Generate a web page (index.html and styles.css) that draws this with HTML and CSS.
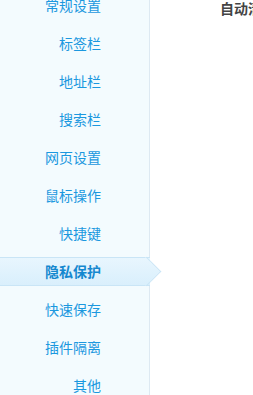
FILE: index.html
```html
<!DOCTYPE html>
<html lang="zh-CN">
<head>
    <meta charset="UTF-8">
    <meta name="viewport" content="width=device-width, initial-scale=1.0">
    <title>设置</title>
    <link rel="stylesheet" href="styles.css">
</head>
<body>
    <div class="settings">
        <ul class="nav">
            <li>常规设置</li>
            <li>标签栏</li>
            <li>地址栏</li>
            <li>搜索栏</li>
            <li>网页设置</li>
            <li>鼠标操作</li>
            <li>快捷键</li>
            <li class="active">隐私保护</li>
            <li>快速保存</li>
            <li>插件隔离</li>
            <li>其他</li>
        </ul>
        <div class="content">
            <h3 class="section-title">自动清除</h3>
        </div>
    </div>
</body>
</html>
```

FILE: styles.css
```css
body {
    margin: 0;
    font-family: "Noto Sans CJK SC", sans-serif;
    background: #fff;
    overflow: hidden;
}

.settings {
    display: flex;
    height: 395px;
}

.nav {
    list-style: none;
    margin: -14px 0 0;
    padding: 0;
    width: 149px;
    flex-shrink: 0;
    background: #f3fbfe;
    border-right: 1px solid #dde9f2;
}

.nav li {
    position: relative;
    height: 38px;
    line-height: 38px;
    padding-right: 48px;
    text-align: right;
    font-size: 14px;
    color: #1b98df;
}

.nav li.active {
    height: 27px;
    line-height: 27px;
    margin: 5px -1px 4px 0;
    padding-right: 49px;
    background: linear-gradient(#e8f6fe, #d9effc);
    border-top: 1px solid #c9e5f6;
    border-bottom: 1px solid #c9e5f6;
    font-weight: bold;
    color: #1588cf;
}

.nav li.active::after {
    content: "";
    position: absolute;
    top: 3px;
    right: -7px;
    width: 20px;
    height: 20px;
    background: linear-gradient(135deg, #e8f6fe, #d9effc);
    border-top: 1px solid #c9e5f6;
    border-right: 1px solid #c9e5f6;
    transform: rotate(45deg);
}

.content {
    flex: 1;
    overflow: hidden;
    padding-left: 70px;
}

.section-title {
    margin: 0;
    font-size: 14px;
    line-height: 16px;
    white-space: nowrap;
    color: #444;
}
```
